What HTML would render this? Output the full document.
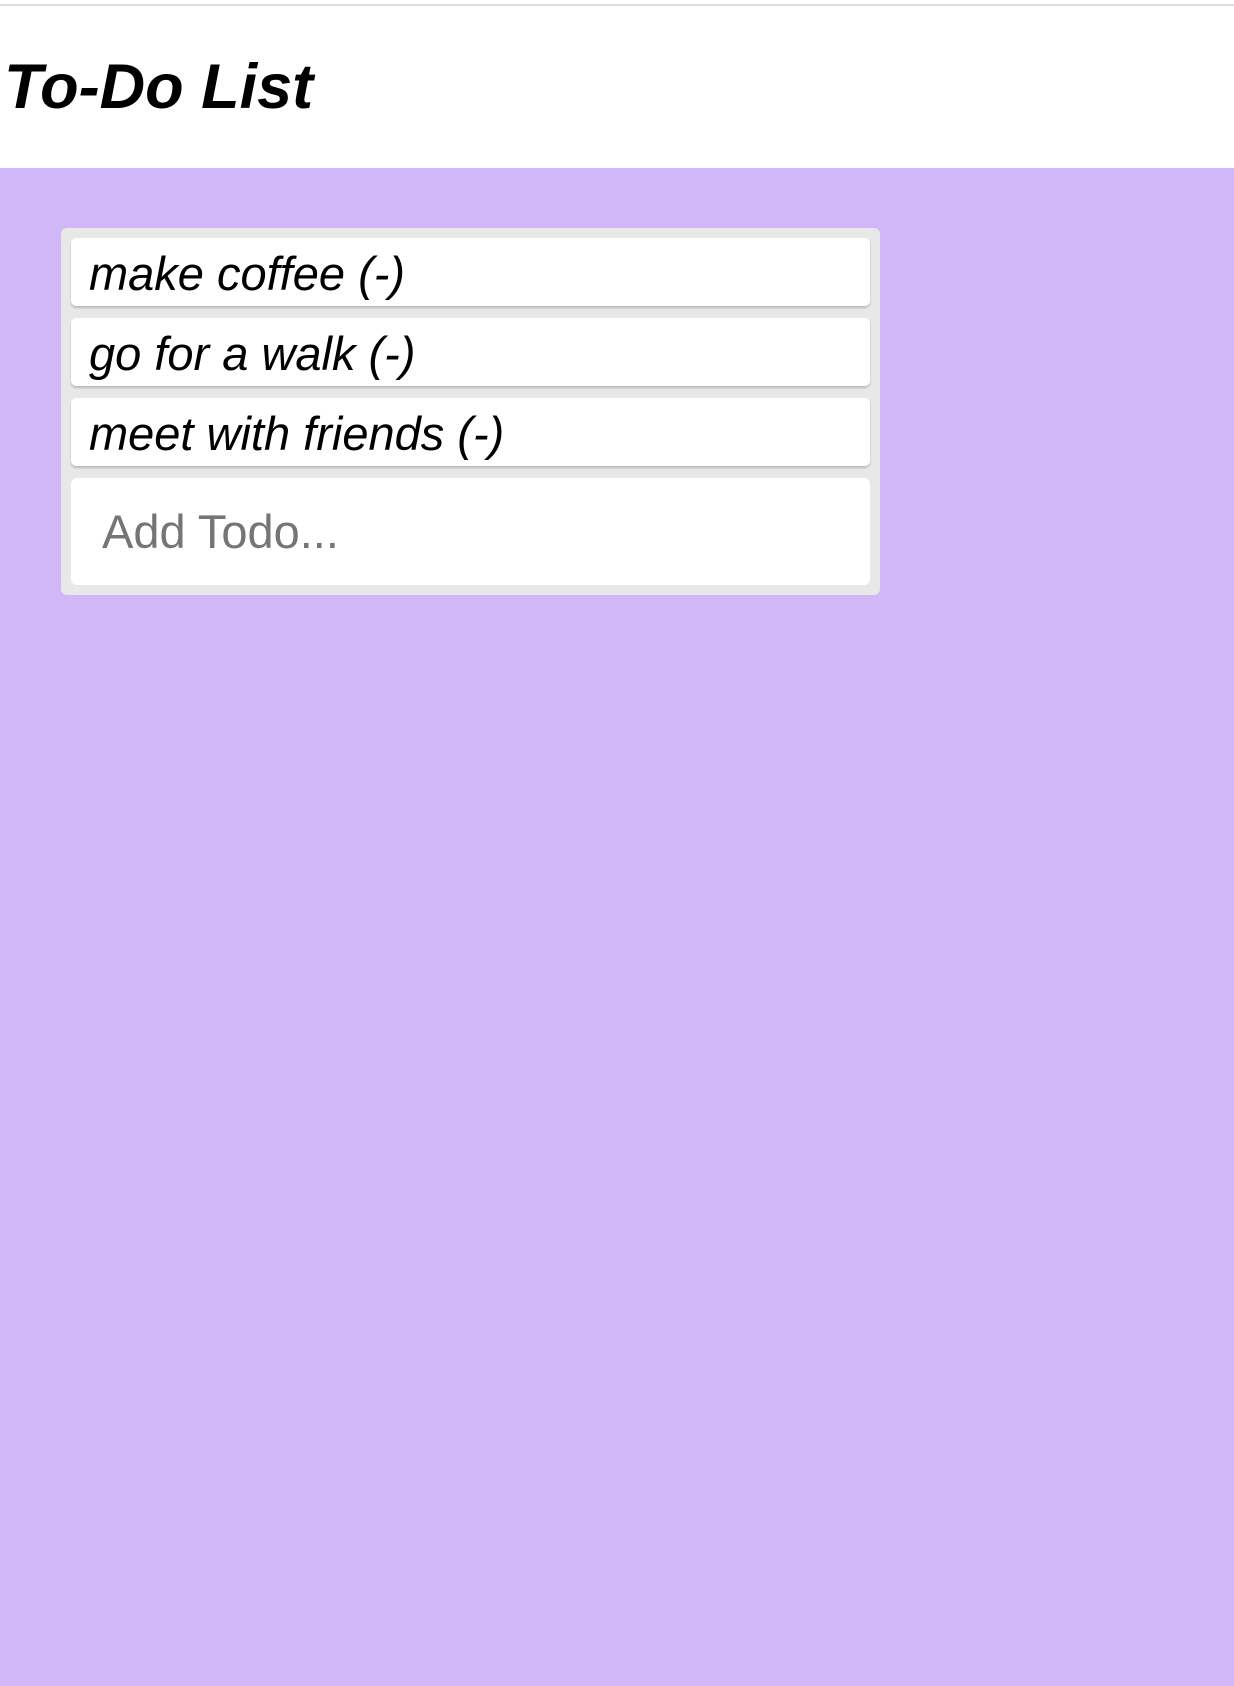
<!DOCTYPE html>
<html><head><style>
html,body{margin:0;padding:0;width:1234px;height:1686px;overflow:hidden;font-family:"Liberation Sans",sans-serif;background:#fff;}
.top{position:absolute;left:0;top:0;width:1234px;height:168px;background:#fff;}
.line{position:absolute;left:0;top:4px;width:1234px;height:2px;background:#e0e0e0;}
h1{position:absolute;left:4px;top:50px;margin:0;font-size:63px;font-style:italic;font-weight:bold;line-height:74px;color:#000;}
.bg{position:absolute;left:0;top:168px;width:1234px;height:1518px;background:#d2b7f8;}
.box{position:absolute;left:61px;top:228px;width:819px;height:367px;background:#e8e8e8;border-radius:6px;}
.item{position:absolute;left:10px;width:799px;height:68px;background:#fff;border-radius:5px;box-shadow:0 2px 2px rgba(0,0,0,0.2);font-style:italic;font-size:47px;line-height:72px;padding-left:18px;box-sizing:border-box;color:#000;overflow:hidden;}
.inp{position:absolute;left:10px;top:250px;width:799px;height:107px;background:#fff;border-radius:6px;font-size:47px;color:#757575;line-height:107px;padding-left:31px;box-sizing:border-box;}
</style></head><body>
<div class="top"><div class="line"></div><h1>To-Do List</h1></div>
<div class="bg"></div>
<div class="box">
<div class="item" style="top:10px">make coffee (-)</div>
<div class="item" style="top:90px">go for a walk (-)</div>
<div class="item" style="top:170px">meet with friends (-)</div>
<div class="inp">Add Todo...</div>
</div>
</body></html>
